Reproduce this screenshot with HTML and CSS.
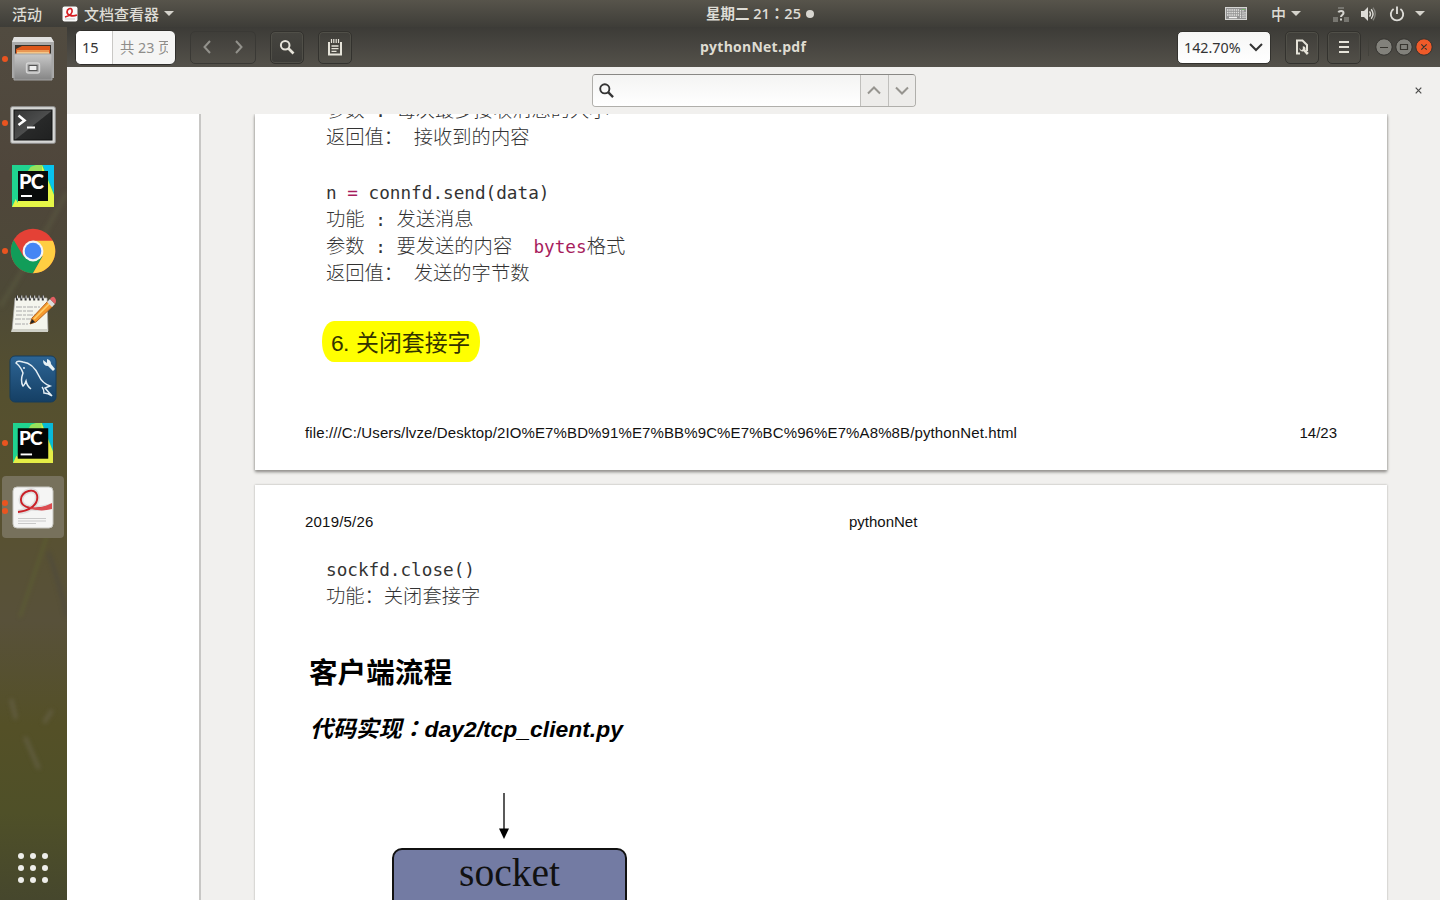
FILE: index.html
```html
<!DOCTYPE html>
<html lang="zh-CN">
<head>
<meta charset="utf-8">
<title>pythonNet.pdf</title>
<link rel="stylesheet" href="styles.css">
</head>
<body>
<header class="topbar">
  <div class="top-left">
    <span class="activities">活动</span>
    <svg class="app-mini" width="16" height="16" viewBox="0 0 16 16"><rect x=".5" y=".5" width="15" height="15" rx="2" fill="#fafafa"/><path d="M3 11C8 10 11 7 10 4C9 1 5 3 5 6C5 9 10 11 15 9" fill="none" stroke="#d71e22" stroke-width="1.7"/><path d="M3 13h10" stroke="#ccc"/></svg>
    <span class="app-name">文档查看器</span>
    <i class="caret"></i>
  </div>
  <div class="clock"><span class="time">星期二 21<span class="mid" lang="zh-TW">：</span>25</span><i class="notice"></i></div>
  <div class="top-right">
    <svg class="keyboard" width="22" height="13" viewBox="0 0 22 13"><rect x=".5" y=".5" width="21" height="12" fill="#929292" stroke="#d5d5d3"/><path d="M2 3h12M2 5.5h12M2 8h12" stroke="#e2e2e0" stroke-width="1.5" stroke-dasharray="1.5 .7"/><path d="M4 10.5h8" stroke="#f2f2f2" stroke-width="1.4"/><path d="M15.5 3v8M18 3v8M20 5v6" stroke="#e2e2e0" stroke-width="1.2" stroke-dasharray="1.5 .7"/><path d="M17 2.5h3" stroke="#75b96a"/></svg>
    <span class="ime">中</span><i class="caret"></i>
    <svg class="net" width="16" height="16" viewBox="0 0 16 16"><path d="M0 11h5v5H0zM11 11h5v5h-5zM5 1h6v2H5z" fill="#777670"/><path d="M5.4 6.4C6 4.6 10.5 4 10.5 7C10.5 9 8 9 8 11M8 12.5v2" fill="none" stroke="#d6d5d0" stroke-width="2"/></svg>
    <svg class="sound" width="16" height="16" viewBox="0 0 16 16"><path d="M1 5h3l4-4v14l-4-4H1z" fill="#dddcd7"/><path d="M9.5 5.4q2 2.6 0 5.2M11.2 3.3q3.7 4.7 0 9.4" fill="none" stroke="#dddcd7" stroke-width="1.4"/><path d="M13 1.7q4.5 6.3 0 12.6" fill="none" stroke="#85847e" stroke-width="1.3"/></svg>
    <svg class="power" width="16" height="16" viewBox="0 0 16 16"><path d="M4.6 3A6.2 6.2 0 1 0 11.4 3M8 .5V8" fill="none" stroke="#dddcd7" stroke-width="1.9"/></svg>
    <i class="caret"></i>
  </div>
</header>
<div class="desktop">
  <nav class="dock">
    <svg class="wall" width="67" height="873" viewBox="0 0 67 873" aria-hidden="true"><g fill="none" stroke-width="4"><path d="M67 165L40 215L0 280" stroke="#68694b" opacity=".35"/><path d="M50 500L35 545L20 590" stroke="#64702d" opacity=".55" stroke-width="2"/><path d="M48 525Q58 550 67 590" stroke="#494642" opacity=".6" stroke-width="3"/><path d="M11 672l5 20M52 683l-8 13M25 710l14 32" stroke="#6a6550" opacity=".6"/></g></svg>
    <div class="slot"><i class="run"></i>
      <svg width="44" height="46" viewBox="0 0 44 46"><defs><linearGradient id="cab" x2="0" y2="1"><stop stop-color="#c8c8c8"/><stop offset="1" stop-color="#858585"/></linearGradient></defs><path d="M3 1h37l3 5v36H1V6z" fill="#aaa"/><path d="M3 1h37l3 5H1z" fill="#e0e0df"/><path d="M4 9h36v10H4z" fill="#37322c"/><path d="M5 13l6-3h28v8H5z" fill="#dc571b"/><path d="M6 14h32v5H6z" fill="#f5c586"/><path d="M6 15h32" stroke="#dc6b25"/><path d="M3 18h38v26H3z" fill="url(#cab)" stroke="#a4a4a4"/><rect x="15.5" y="27" width="13" height="10" rx="2" fill="#aaa" stroke="#d5d5d5" stroke-width="1.4"/><rect x="18" y="29.5" width="8" height="5" fill="#eee" stroke="#555"/></svg></div>
    <div class="slot low"><i class="run"></i>
      <svg width="46" height="38" viewBox="0 0 46 38"><defs><linearGradient id="term" x2="1" y2="1"><stop stop-color="#353636"/><stop offset=".5" stop-color="#4c4d4d"/><stop offset=".52" stop-color="#282929"/><stop offset="1" stop-color="#202121"/></linearGradient></defs><rect x=".7" y=".7" width="44.6" height="36.6" rx="1.5" fill="#d7d8d6" stroke="#949494"/><rect x="4" y="4" width="38" height="30" fill="url(#term)" stroke="#111"/><path d="M8.5 9.5l6 5l-6 4.5" fill="none" stroke="#fff" stroke-width="2.6"/><path d="M17 21.5h8" stroke="#fff" stroke-width="2"/></svg></div>
    <div class="slot"><div class="pycharm"><svg width="42" height="42" viewBox="0 0 42 42"><path d="M0 0h42v42H0z" fill="#20d390"/><path d="M31 0h11v28z" fill="#08c3ee"/><path d="M18 4L30 0l12 30v12H0z" fill="#e5f647"/><path d="M6 6l18-6h6v8z" fill="#98e15b"/><path d="M0 28V0h20L6 20v18z" fill="#20d390"/><path d="M6 6h30v30H6z" fill="#080b0b"/><path d="M9 31h11" stroke="#fff" stroke-width="2"/></svg><b>PC</b></div></div>
    <div class="slot"><i class="run"></i>
      <svg width="46" height="46" viewBox="0 0 46 46"><circle cx="23" cy="23" r="22.3" fill="#e44136"/><path d="M3.7 12A22.3 22.3 0 0 0 23 45.3L32.5 28.5L13.5 28.5z" fill="#119d59"/><path d="M23 12.8H42.8A22.3 22.3 0 0 1 23 45.3L32.5 28.5z" fill="#ffce42"/><circle cx="23" cy="23" r="10.4" fill="#f5f5f5"/><circle cx="23" cy="23" r="8.3" fill="#4586f4"/></svg></div>
    <div class="slot">
      <svg width="46" height="40" viewBox="0 0 46 40"><path d="M5 3h32l1 33H2z" fill="#f4f5ed" stroke="#aaa" stroke-width=".7"/><path d="M2 34h36v3H1z" fill="#d0d1c8"/><path d="M6 3h30" stroke="#343434" stroke-width="5" stroke-dasharray="2 2.3"/><path d="M7 2h30" stroke="#ddd" stroke-width="3" stroke-dasharray="1 3.3"/><path d="M6 12h24M6 16h18M6 20h25M5 24h16M5 29h13" stroke="#aaa" stroke-dasharray="6 1 3 1"/><path d="M20 29L22 23L38 6l5 5L26 27z" fill="#f6992d" stroke="#b56520"/><path d="M24 24L40 8" stroke="#ffd06a" stroke-width="1.6"/><path d="M37 7l3-3l5 5l-3 3z" fill="#ddd"/><path d="M40 4q3-4 5-1t0 6z" fill="#e15f63"/><path d="M20 29l2-5l3 3z" fill="#242424"/></svg></div>
    <div class="slot">
      <svg width="48" height="48" viewBox="0 0 48 48"><defs><linearGradient id="sea" x2="0" y2="1"><stop stop-color="#2d6595"/><stop offset="1" stop-color="#153f64"/></linearGradient></defs><rect x="1" y="1" width="46" height="46" rx="5" fill="url(#sea)" stroke="#173d5b"/><path d="M22 34Q18 31 17 26Q15 31 14 31Q11 26 14 18Q12 12 7 8Q8 5 14 7Q24 8 30 21Q33 28 41 31L36 33L43 41Q39 38 35 38Q35 34 33 32" fill="none" stroke="#e4eef4" stroke-width="1.5"/><circle cx="15" cy="13" r=".9" fill="#fff"/><path d="M34 5l4 3l0-4q4 1 4 5l4 5l-2 2l-5-5q-5 0-5-6z" fill="#e9f2f5"/></svg></div>
    <div class="slot"><i class="run"></i><div class="pycharm second"><svg width="40" height="40" viewBox="0 0 42 42"><path d="M0 0h42v42H0z" fill="#20d390"/><path d="M31 0h11v28z" fill="#08b9da"/><path d="M18 4L30 0l12 30v12H0z" fill="#e5ed46"/><path d="M6 6l18-6h6v8z" fill="#98e15b"/><path d="M0 30V0h20L5 24v12z" fill="#20d390"/><path d="M5 5.5h32v32H5z" fill="#030404"/><path d="M8 33h12" stroke="#fff" stroke-width="2"/></svg><b>PC</b></div></div>
    <div class="slot active"><i class="run twice"></i>
      <svg width="42" height="43" viewBox="0 0 42 43"><rect x="1" y="1" width="40" height="41" rx="4" fill="#f5f5f4" stroke="#c7c6c0"/><path d="M6 26C18 25 27 18 25 9C23 1 10 5 9 13C8 22 22 25 39 20" fill="none" stroke="#dedede" stroke-width="5"/><path d="M6 26C18 25 27 18 25 9C23 1 10 5 9 13C8 22 22 25 39 20" fill="none" stroke="#ca2027" stroke-width="1.9"/><path d="M14 20Q25 25 40 17v6Q25 27 14 20" fill="#dc4c50"/><path d="M6 32.5h28M6 35h28M6 37.5h18" stroke="#c9c9c9"/></svg></div>
    <svg class="apps" width="30" height="30" viewBox="0 0 30 30" fill="#eeeeea"><circle cx="3" cy="3" r="3"/><circle cx="15" cy="3" r="3"/><circle cx="27" cy="3" r="3"/><circle cx="3" cy="15" r="3"/><circle cx="15" cy="15" r="3"/><circle cx="27" cy="15" r="3"/><circle cx="3" cy="27" r="3"/><circle cx="15" cy="27" r="3"/><circle cx="27" cy="27" r="3"/></svg>
  </nav>
  <main class="window">
    <div class="headerbar">
      <div class="tools">
        <div class="pager"><span class="current">15</span><span class="total">共 23 页</span></div>
        <div class="btn history"><svg width="44" height="16" viewBox="0 0 44 16" fill="none" stroke="#92918b" stroke-width="2"><path d="M9 2L3.5 8L9 14M35 2l5.5 6L35 14"/></svg></div>
        <div class="btn find"><svg width="16" height="16" viewBox="0 0 16 16" fill="none" stroke="#e6e3d9"><circle cx="6.2" cy="6.2" r="4.3" stroke-width="2"/><path d="M9.5 9.5l5 5" stroke-width="2.6"/></svg></div>
        <div class="btn notes"><svg width="14" height="17" viewBox="0 0 14 17" fill="none" stroke="#e6e3d9"><path d="M1 3v12.5h12V3" stroke-width="2"/><path d="M3.5 0v4M5.8 0v4M8.2 0v4M10.5 0v4" stroke-width="1.2"/><path d="M3.5 7h7M3.5 9.7h7M3.5 12.4h5" stroke-width="1.3"/></svg></div>
      </div>
      <b class="title">pythonNet.pdf</b>
      <div class="controls">
        <div class="zoom"><span>142.70%</span><svg width="14" height="9" viewBox="0 0 14 9"><path d="M1 1l6 6l6-6" fill="none" stroke="#333" stroke-width="2"/></svg></div>
        <div class="btn props"><svg width="14" height="16" viewBox="0 0 14 16"><path d="M5 14.5H2V1.5h5.5L12 6v6" fill="none" stroke="#e6e3d9" stroke-width="2"/><path d="M4.5 9a3 3 0 0 0 4 3.3l3.4 3.7 1.9-1.9-3.3-3.4a3 3 0 0 0-2.7-3.5v3l-1.6 1z" fill="#e6e3d9"/></svg></div>
        <div class="btn menu"><svg width="10" height="12" viewBox="0 0 10 12"><path d="M0 1h10M0 6h10M0 11h10" stroke="#e6e3d9" stroke-width="2"/></svg></div>
        <div class="wm"><svg width="58" height="18" viewBox="0 0 58 18"><g stroke="#34332f"><circle cx="9" cy="9" r="8.2" fill="#82817b"/><circle cx="29" cy="9" r="8.2" fill="#82817b"/><circle cx="49" cy="9" r="8.2" fill="#ef5a29"/></g><path d="M5 9.5h8M25.5 6.5h7v5h-7zM46.3 6.3l5.4 5.4M51.7 6.3l-5.4 5.4" fill="none" stroke="#37352f" stroke-width="1.2"/></svg></div>
      </div>
    </div>
    <div class="findbar">
      <div class="search">
        <div class="field"><svg width="15" height="15" viewBox="0 0 16 16" fill="none" stroke="#353535"><circle cx="6.2" cy="6.2" r="4.9" stroke-width="2"/><path d="M9.7 9.7l5.3 5.3" stroke-width="2.5"/></svg></div>
        <div class="step"><svg width="14" height="9" viewBox="0 0 14 9"><path d="M1 7.5l6-6L13 7.5" fill="none" stroke="#96948f" stroke-width="2"/></svg></div>
        <div class="step last"><svg width="14" height="9" viewBox="0 0 14 9"><path d="M1 1.5l6 6L13 1.5" fill="none" stroke="#96948f" stroke-width="2"/></svg></div>
      </div>
      <svg class="close" width="7" height="7" viewBox="0 0 7 7"><path d="M.7.7l5.6 5.6M6.3.7L.7 6.3" stroke="#4b4b4a" stroke-width="1.2"/></svg>
    </div>
    <div class="viewer">
      <aside class="side"></aside>
      <section class="pages">
        <article class="page first">
<pre class="code"><span class="zh">参数</span> : <span class="zh">每次最多接收消息的大小</span>
<span class="zh">返回值：</span> <span class="zh">接收到的内容</span>

n <em>=</em> connfd.send(data)
<span class="zh">功能</span> : <span class="zh">发送消息</span>
<span class="zh">参数</span> : <span class="zh">要发送的内容</span>  <em>bytes</em><span class="zh">格式</span>
<span class="zh">返回值：</span> <span class="zh">发送的字节数</span></pre>
          <h3 class="marked"><span class="num">6.</span><span>关闭套接字</span></h3>
          <div class="foot"><span class="url">file:///C:/Users/lvze/Desktop/2IO%E7%BD%91%E7%BB%9C%E7%BC%96%E7%A8%8B/pythonNet.html</span><span>14/23</span></div>
        </article>
        <article class="page second-page">
          <div class="head"><span class="date">2019/5/26</span><span>pythonNet</span></div>
<pre class="code">sockfd.close()
<span class="zh">功能：关闭套接字</span></pre>
          <h2>客户端流程</h2>
          <h4>代码实现<span class="mid" lang="zh-TW">：</span>day2/tcp_client.py</h4>
          <div class="flow">
            <svg width="12" height="46" viewBox="0 0 12 46"><path d="M6 0v38" stroke="#000" stroke-width="1.3"/><path d="M1 35.5h10L6 46z" fill="#000"/></svg>
            <div class="node">socket</div>
          </div>
        </article>
      </section>
    </div>
  </main>
</div>
</body>
</html>
```

FILE: styles.css
```css
* { box-sizing: border-box; }
body { margin: 0; width: 1440px; height: 900px; overflow: hidden; font-family: "Open Sans", "Noto Sans CJK SC", sans-serif; background: #f1f0ee; }
svg { display: block; flex: none; }
.topbar { height: 27px; display: grid; grid-template-columns: 700px 120px 1fr; grid-template-rows: 27px; color: #dedcd5; font-size: 15px; line-height: 26px; background: linear-gradient(#57544b, #3e3d38); white-space: nowrap; }
.top-left, .top-right, .clock { display: flex; align-items: center; height: 27px; }
.activities { margin-left: 12px; width: 50px; }
.topbar span { font-weight: 500; }
.app-name { margin-left: 6px; }
.caret { border: 5px solid transparent; border-top-color: #d5d3cc; border-bottom: 0; margin-left: 5px; }
.clock { padding-left: 6px; }
.topbar .time { font-weight: 600; font-size: 14.5px; width: 97px; }
.topbar .time .mid { font-weight: 600; line-height: 16px; }
.mid { font-family: "Noto Sans CJK TC", sans-serif; }
.notice { width: 8px; height: 8px; border-radius: 50%; background: #d8d6d0; margin-left: 3px; }
.keyboard { margin-left: 405px; }
.ime { margin-left: 24px; }
.net { margin-left: 32px; }
.sound { margin-left: 11px; }
.power { margin-left: 13px; }
.top-right .caret:last-child { margin-left: 10px; }

.desktop { display: flex; height: 873px; }
.dock { position: relative; width: 67px; flex: none; display: flex; flex-direction: column; align-items: flex-start; padding: 1px 0 0 2px; background: linear-gradient(#514b40, #4f463b 17%, #4d4937 30%, #55502f 42%, #58512f 54%, #58513a 68%, #545027 80%, #4f5028 90%, #46472d); }
.wall { position: absolute; left: 0; top: 0; clip-path: inset(0); filter: blur(2px); }
.slot { position: relative; width: 62px; height: 62px; margin-bottom: 2px; display: flex; align-items: center; justify-content: center; border-radius: 4px; }
.slot.low { padding-top: 3px; }
.slot.active { background: #77715c; }
.run { position: absolute; left: 0; top: 28px; width: 6px; height: 6px; border-radius: 50%; background: #e95420; }
.slot .twice { top: 24px; box-shadow: 0 8px #e95420; }
.pycharm { position: relative; top: -1px; }
.pycharm b { position: absolute; left: 7px; top: 5px; color: #fff; font: 900 20px/22px Lato, sans-serif; letter-spacing: -.8px; }
.pycharm.second { top: 0; }
.pycharm.second b { font-size: 19px; top: 4px; left: 6px; }
.apps { margin: 313px 0 0 16px; position: relative; }

.window { flex: 1; min-width: 0; display: flex; flex-direction: column; }
.headerbar { height: 40px; display: grid; grid-template-columns: 633px 1fr 329px; align-items: center; background: linear-gradient(#3c3b37, #54514a); }
.tools, .controls { display: flex; align-items: center; }
.btn { height: 33px; width: 34px; flex: none; border: 1px solid #33322e; border-radius: 5px; display: flex; align-items: center; justify-content: center; background: linear-gradient(#45443f, #3d3c38); box-shadow: inset 0 0 0 1px #504f48; }
.pager { margin-left: 8px; width: 101px; height: 35px; display: flex; border-radius: 6px; overflow: hidden; font: 14.5px/33px "Noto Sans", "Noto Sans CJK SC", sans-serif; background: #f5f5f4; border: 1px solid #302f2c; white-space: nowrap; }
.current { width: 37px; padding-left: 6px; background: #fff; color: #333; border-right: 1px solid #c9c8c5; }
.total { margin-left: 7px; width: 48px; overflow: hidden; color: #8e8d8a; font-size: 14.3px; }
.history { margin-left: 14px; width: 66px; background: none; box-shadow: none; border-color: #3a3935; }
.find { margin-left: 14px; }
.notes { margin-left: 14px; background: none; }
.title { color: #dfdcd2; font-size: 14px; line-height: 20px; letter-spacing: .25px; white-space: nowrap; }
.controls { padding-left: 66px; }
.zoom { width: 94px; height: 33px; flex: none; border-radius: 5px; background: linear-gradient(#f6f6f5, #fff); border: 1px solid #33322e; display: flex; align-items: center; justify-content: space-between; padding: 0 7px 0 6px; color: #333; font: 14.3px/29px "Noto Sans", sans-serif; }
.props { margin-left: 14px; background: none; }
.menu { margin-left: 8px; background: none; }
.wm { margin-left: 7px; padding-left: 6px; border-left: 1px solid #42413b; }
.findbar { height: 47px; position: relative; display: flex; align-items: center; padding-left: 525px; background: #f1f0ee; }
.search { display: flex; width: 324px; height: 33px; border: 1px solid #b0afab; border-top-color: #898885; border-radius: 4px; overflow: hidden; }
.field { width: 267px; padding-left: 6px; display: flex; align-items: center; background: linear-gradient(#f4f4f3, #fff); }
.step { flex: 1; display: flex; align-items: center; justify-content: center; border-left: 1px solid #c0bfbc; background: #edecea; }
.close { margin-left: 499px; }

.viewer { flex: 1; min-height: 0; display: flex; overflow: hidden; }
.side { width: 134px; flex: none; background: #fff; border-right: 2px solid #c8c7c5; }
.pages { flex: 1; padding-left: 54px; overflow: hidden; }
.page { position: relative; width: 1132px; background: #fff; padding: 0 50px; box-shadow: 0 0 2px #aaa9a6; overflow: hidden; }
.first { height: 356px; box-shadow: 0 0 2px #aaa9a6, 0 2px 3px #85837f; }
.second-page { margin-top: 15px; height: 450px; }
.code { margin: 0 0 0 21px; color: #333; font: 17.68px/27.2px "DejaVu Sans Mono", monospace; }
.code em { color: #a71d5d; font-style: normal; }
.zh { font: 300 19.3px/20px "Noto Sans CJK SC", sans-serif; }
.first .code { margin-top: -16px; }
.marked { width: 158px; height: 41px; margin: 33px 0 0 17px; padding-left: 9px; border-radius: 12px / 20px; background: #ff0; color: #333300; font: 400 22.9px/44px "Liberation Sans", "Noto Sans CJK SC", sans-serif; white-space: nowrap; display: flex; }
.num { width: 25px; letter-spacing: -.8px; }
.foot, .head { display: flex; justify-content: space-between; color: #111; font: 15px/18px "Liberation Sans", sans-serif; }
.foot { margin-top: 62px; }
.url { letter-spacing: .12px; }
.date { letter-spacing: .2px; }
.head { display: grid; grid-template-columns: 544px 1fr; padding-top: 28px; }
.second-page .code { margin-top: 26px; }
h2 { margin: 39px 0 0 4px; color: #000; font: 700 28.6px/42px "Noto Sans CJK SC", sans-serif; }
h4 { margin: 20px 0 0 5px; color: #000; font: italic 700 22.9px/34px "Liberation Sans", "Noto Sans CJK SC", sans-serif; white-space: nowrap; }
h4 .mid { line-height: 20px; }
.flow { width: 235px; margin: 47px 0 0 87px; }
.flow svg { margin-left: 106px; }
.node { margin-top: 9px; height: 64px; border: 2px solid #111; border-radius: 10px; background: #737ba3; color: #111; text-align: center; font: 39.5px/47px "Liberation Serif", serif; }
```
